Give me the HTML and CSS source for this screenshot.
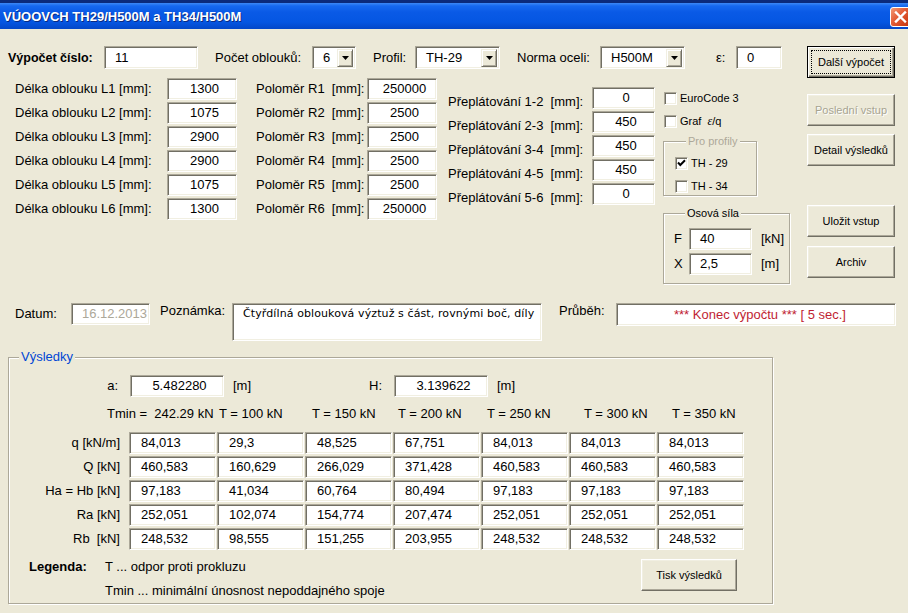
FILE: index.html
```html
<!DOCTYPE html>
<html lang="cs">
<head>
<meta charset="utf-8">
<title>VÚOOVCH TH29/H500M a TH34/H500M</title>
<link rel="stylesheet" href="styles.css">
</head>
<body>
<div class="window">
  <header class="titlebar">
    <span class="title">VÚOOVCH TH29/H500M a TH34/H500M</span>
    <span class="close"><svg width="19" height="18" viewBox="0 0 19 18"><path d="M5 4.5 L14 13.5 M14 4.5 L5 13.5" stroke="#fff" stroke-width="2.4" stroke-linecap="square"/></svg></span>
  </header>
  <main class="client">
    <section class="top">
      <div class="main">
        <div class="row1">
          <span class="lbl-bold lbl-cislo">Výpočet číslo:</span>
          <span class="edit edit-tall edit-cislo">11</span>
          <span class="lbl lbl-pocet">Počet oblouků:</span>
          <span class="combo combo-pocet"><span class="val">6</span><span class="drop"><svg width="7" height="4" viewBox="0 0 7 4"><path d="M0 0 H7 L3.5 4 Z" fill="#000"/></svg></span></span>
          <span class="lbl lbl-profil">Profil:</span>
          <span class="combo combo-wide"><span class="val">TH-29</span><span class="drop"><svg width="7" height="4" viewBox="0 0 7 4"><path d="M0 0 H7 L3.5 4 Z" fill="#000"/></svg></span></span>
          <span class="lbl lbl-norma">Norma oceli:</span>
          <span class="combo combo-wide"><span class="val">H500M</span><span class="drop"><svg width="7" height="4" viewBox="0 0 7 4"><path d="M0 0 H7 L3.5 4 Z" fill="#000"/></svg></span></span>
          <span class="lbl lbl-eps">ε:</span>
          <span class="edit edit-tall edit-eps">0</span>
        </div>
        <div class="cols">
          <div class="col col-a">
            <div class="frow"><span class="lbl la">Délka oblouku L1 [mm]:</span><span class="edit ctr ea">1300</span></div>
            <div class="frow"><span class="lbl la">Délka oblouku L2 [mm]:</span><span class="edit ctr ea">1075</span></div>
            <div class="frow"><span class="lbl la">Délka oblouku L3 [mm]:</span><span class="edit ctr ea">2900</span></div>
            <div class="frow"><span class="lbl la">Délka oblouku L4 [mm]:</span><span class="edit ctr ea">2900</span></div>
            <div class="frow"><span class="lbl la">Délka oblouku L5 [mm]:</span><span class="edit ctr ea">1075</span></div>
            <div class="frow"><span class="lbl la">Délka oblouku L6 [mm]:</span><span class="edit ctr ea">1300</span></div>
          </div>
          <div class="col col-b">
            <div class="frow"><span class="lbl lb">Poloměr R1  [mm]:</span><span class="edit ctr ea">250000</span></div>
            <div class="frow"><span class="lbl lb">Poloměr R2  [mm]:</span><span class="edit ctr ea">2500</span></div>
            <div class="frow"><span class="lbl lb">Poloměr R3  [mm]:</span><span class="edit ctr ea">2500</span></div>
            <div class="frow"><span class="lbl lb">Poloměr R4  [mm]:</span><span class="edit ctr ea">2500</span></div>
            <div class="frow"><span class="lbl lb">Poloměr R5  [mm]:</span><span class="edit ctr ea">2500</span></div>
            <div class="frow"><span class="lbl lb">Poloměr R6  [mm]:</span><span class="edit ctr ea">250000</span></div>
          </div>
          <div class="col col-c">
            <div class="frow"><span class="lbl lc">Přeplátování 1-2  [mm]:</span><span class="edit ctr ec">0</span></div>
            <div class="frow"><span class="lbl lc">Přeplátování 2-3  [mm]:</span><span class="edit ctr ec">450</span></div>
            <div class="frow"><span class="lbl lc">Přeplátování 3-4  [mm]:</span><span class="edit ctr ec">450</span></div>
            <div class="frow"><span class="lbl lc">Přeplátování 4-5  [mm]:</span><span class="edit ctr ec">450</span></div>
            <div class="frow"><span class="lbl lc">Přeplátování 5-6  [mm]:</span><span class="edit ctr ec">0</span></div>
          </div>
          <div class="col col-d">
            <div class="chk chk-euro"><span class="box"></span><span class="chk-text">EuroCode 3</span></div>
            <div class="chk chk-graf"><span class="box"></span><span class="chk-text">Graf  <i class="eps">ε</i>/q</span></div>
            <fieldset class="group profily">
              <legend class="legend-disabled">Pro profily</legend>
              <div class="chk"><span class="box"><svg width="11" height="11" viewBox="0 0 11 11"><path d="M2 4.5 L4.3 7 L9 2.2" stroke="#000" stroke-width="2" fill="none"/></svg></span><span class="chk-text">TH - 29</span></div>
              <div class="chk chk-34"><span class="box"></span><span class="chk-text">TH - 34</span></div>
            </fieldset>
            <fieldset class="group osova">
              <legend>Osová síla</legend>
              <div class="frow frow-os"><span class="lbl lo">F</span><span class="edit eo">40</span><span class="lbl unit">[kN]</span></div>
              <div class="frow frow-os frow-x"><span class="lbl lo">X</span><span class="edit eo">2,5</span><span class="lbl unit">[m]</span></div>
            </fieldset>
          </div>
        </div>
      </div>
      <div class="buttons">
        <div class="btn btn-default"><span class="focus">Další výpočet</span></div>
        <div class="btn btn-disabled btn-posledni">Poslední vstup</div>
        <div class="btn btn-detail">Detail výsledků</div>
        <div class="btn btn-ulozit">Uložit vstup</div>
        <div class="btn btn-archiv">Archiv</div>
      </div>
    </section>

    <section class="note-row">
      <span class="lbl lbl-datum">Datum:</span>
      <span class="edit edit-date">16.12.2013</span>
      <span class="lbl lbl-top lbl-pozn">Poznámka:</span>
      <div class="edit memo">Čtyřdílná oblouková výztuž s část, rovnými boč, díly</div>
      <span class="lbl lbl-top lbl-prubeh">Průběh:</span>
      <span class="edit progress">*** Konec výpočtu *** [ 5 sec.]</span>
    </section>

    <fieldset class="group results">
      <legend class="legend-blue">Výsledky</legend>
      <div class="res-ah">
        <span class="lbl lab-a">a:</span>
        <span class="edit ctr edit-res">5.482280</span>
        <span class="lbl unit-a">[m]</span>
        <span class="lbl lab-h">H:</span>
        <span class="edit ctr edit-res">3.139622</span>
        <span class="lbl unit-h">[m]</span>
      </div>
      <div class="res-head">
        <span class="h h0">Tmin =  242.29 kN</span>
        <span class="h h1">T = 100 kN</span>
        <span class="h h2">T = 150 kN</span>
        <span class="h h3">T = 200 kN</span>
        <span class="h h4">T = 250 kN</span>
        <span class="h h5">T = 300 kN</span>
        <span class="h h6">T = 350 kN</span>
      </div>
      <div class="res-grid">
        <span class="rl">q [kN/m]</span>
        <span class="edit cell">84,013</span><span class="edit cell">29,3</span><span class="edit cell">48,525</span><span class="edit cell">67,751</span><span class="edit cell">84,013</span><span class="edit cell">84,013</span><span class="edit cell">84,013</span>
        <span class="rl">Q [kN]</span>
        <span class="edit cell">460,583</span><span class="edit cell">160,629</span><span class="edit cell">266,029</span><span class="edit cell">371,428</span><span class="edit cell">460,583</span><span class="edit cell">460,583</span><span class="edit cell">460,583</span>
        <span class="rl">Ha = Hb [kN]</span>
        <span class="edit cell">97,183</span><span class="edit cell">41,034</span><span class="edit cell">60,764</span><span class="edit cell">80,494</span><span class="edit cell">97,183</span><span class="edit cell">97,183</span><span class="edit cell">97,183</span>
        <span class="rl">Ra [kN]</span>
        <span class="edit cell">252,051</span><span class="edit cell">102,074</span><span class="edit cell">154,774</span><span class="edit cell">207,474</span><span class="edit cell">252,051</span><span class="edit cell">252,051</span><span class="edit cell">252,051</span>
        <span class="rl">Rb  [kN]</span>
        <span class="edit cell">248,532</span><span class="edit cell">98,555</span><span class="edit cell">151,255</span><span class="edit cell">203,955</span><span class="edit cell">248,532</span><span class="edit cell">248,532</span><span class="edit cell">248,532</span>
      </div>
      <div class="legend-row">
        <span class="leg-title">Legenda:</span>
        <div class="leg-texts">
          <div>T ... odpor proti prokluzu</div>
          <div>Tmin ... minimální únosnost nepoddajného spoje</div>
        </div>
        <div class="btn btn-print">Tisk výsledků</div>
      </div>
    </fieldset>
  </main>
</div>
</body>
</html>
```

FILE: styles.css
```css
* { box-sizing: border-box; }
html, body { margin: 0; padding: 0; }
body {
  width: 908px;
  height: 613px;
  overflow: hidden;
  background: #ECE9D8;
  font-family: "Liberation Sans", Arial, sans-serif;
  font-size: 13px;
  color: #000;
}
.window { width: 908px; height: 613px; display: flex; flex-direction: column; }

/* title bar */
.titlebar {
  height: 29px;
  flex: none;
  display: flex;
  align-items: center;
  justify-content: space-between;
  padding: 3px 0 0 3px;
  background: linear-gradient(#0b2a7a 0, #0b2a7a 3px, #3c88f5 3px, #1668ee 6px, #0a5ae6 12px, #0556e2 22px, #0347c8 29px);
  color: #fff;
}
.title { font-weight: bold; font-size: 13px; text-shadow: 1px 1px 0 #0a2a80; white-space: nowrap; }
.close {
  width: 21px;
  height: 20px;
  margin-right: -3px;
  margin-top: 1px;
  border: 1px solid #fff;
  border-radius: 3px;
  background: linear-gradient(135deg, #f39a76 0%, #e4603a 40%, #d2431c 75%, #c0360f 100%);
  display: flex;
  align-items: center;
  justify-content: center;
}
.close svg { display: block; }

.client { flex: 1; display: flex; flex-direction: column; }

/* generic controls */
.lbl { white-space: pre; line-height: 22px; }
.lbl-bold { font-weight: bold; font-size: 12.5px; white-space: nowrap; }
.edit {
  display: block;
  height: 22px;
  background: #fff;
  border: 1px solid;
  border-color: #ACA899 #fff #fff #ACA899;
  box-shadow: inset 1px 1px 0 #716F64, inset -1px -1px 0 #F1EFE2;
  line-height: 20px;
  white-space: nowrap;
  overflow: hidden;
  padding: 0 0 0 10px;
}
.edit-tall { height: 23px; line-height: 21px; }
.ctr { text-align: center; padding: 0 0 0 5px; }

.combo {
  display: flex;
  height: 23px;
  background: #fff;
  border: 1px solid;
  border-color: #ACA899 #fff #fff #ACA899;
  box-shadow: inset 1px 1px 0 #716F64, inset -1px -1px 0 #F1EFE2;
  padding: 2px 2px 1px 2px;
}
.combo .val { flex: 1; line-height: 18px; padding-left: 8px; white-space: nowrap; }
.combo .drop {
  width: 16px;
  background: #ECE9D8;
  border: 1px solid;
  border-color: #F1EFE2 #716F64 #716F64 #F1EFE2;
  box-shadow: inset 1px 1px 0 #fff, inset -1px -1px 0 #ACA899;
  display: flex;
  align-items: center;
  justify-content: center;
}
.combo .drop svg { display: block; }

.btn {
  height: 32px;
  display: flex;
  align-items: center;
  justify-content: center;
  background: #ECE9D8;
  border: 1px solid;
  border-color: #fff #716F64 #716F64 #fff;
  box-shadow: inset -1px -1px 0 #ACA899, inset 1px 1px 0 #F1EFE2;
  font-size: 11px;
  white-space: nowrap;
}
.btn-default {
  border-color: #000;
  box-shadow: inset 1px 1px 0 #fff, inset -1px -1px 0 #716F64, inset -2px -2px 0 #ACA899;
  padding: 3px;
  align-items: stretch;
}
.btn-default .focus {
  flex: 1;
  border: 1px dotted #000;
  display: flex;
  align-items: center;
  justify-content: center;
}
.btn-disabled { color: #A7A491; text-shadow: 1px 1px 0 #fff; }

.chk { display: flex; align-items: center; height: 13px; }
.box {
  width: 13px;
  height: 13px;
  flex: none;
  background: #fff;
  border: 1px solid;
  border-color: #ACA899 #fff #fff #ACA899;
  box-shadow: inset 1px 1px 0 #716F64, inset -1px -1px 0 #F1EFE2;
  display: flex;
  align-items: center;
  justify-content: center;
}
.box svg { display: block; }
.chk-text { font-size: 11px; padding-left: 3px; white-space: pre; line-height: 13px; }
.eps { font-family: "Liberation Serif", serif; font-size: 12px; }

.group {
  margin: 0;
  padding: 0;
  min-width: 0;
  border: 1px solid #ACA899;
  box-shadow: inset 1px 1px 0 #fff, 1px 1px 0 #fff;
}
.group legend {
  padding: 0 2px;
  margin-left: 11px;
  font-size: 11px;
  line-height: 12px;
  background: #ECE9D8;
}
.legend-disabled { color: #ACA899; }
.legend-blue { color: #0046D5; }

/* top section */
.top { height: 274px; flex: none; padding: 17px 0 0 8px; display: flex; }
.main { width: 782px; flex: none; display: flex; flex-direction: column; }
.row1 { display: flex; align-items: center; height: 23px; }
.lbl-cislo { width: 96px; }
.edit-cislo { width: 94px; }
.lbl-pocet { margin-left: 17px; width: 97px; }
.combo-pocet { width: 44px; }
.lbl-profil { margin-left: 17px; width: 42px; }
.combo-wide { width: 85px; }
.lbl-norma { margin-left: 17px; width: 83px; }
.lbl-eps { margin-left: 31px; width: 20px; }
.edit-eps { width: 46px; }

.cols { display: flex; margin-top: 9px; padding-left: 7px; }
.col { display: flex; flex-direction: column; }
.frow { display: flex; height: 22px; margin-bottom: 2px; }
.la { width: 152px; }
.ea { width: 70px; }
.col-b { margin-left: 19px; }
.lb { width: 111px; }
.col-c { margin-left: 11px; margin-top: 9px; }
.lc { width: 144px; margin-top: 4px; }
.ec { width: 63px; }
.col-d { margin-left: 8px; width: 127px; }
.chk-euro { margin-top: 14px; margin-left: 1px; }
.chk-graf { margin-top: 10px; margin-left: 1px; }
.profily { margin-top: 7px; width: 94px; padding: 10px 0 2px 11px; }
.chk-34 { margin-top: 10px; }
.osova { margin-top: 11px; width: 127px; padding: 9px 0 8px 10px; }
.frow-os { margin-bottom: 0; }
.frow-x { margin-top: 3px; }
.lo { width: 15px; }
.eo { width: 63px; }
.unit { margin-left: 9px; }

.buttons { margin-left: 17px; width: 88px; flex: none; display: flex; flex-direction: column; }
.btn-posledni { margin-top: 16px; }
.btn-detail { margin-top: 8px; }
.btn-ulozit { margin-top: 39px; }
.btn-archiv { margin-top: 9px; }

/* note row */
.note-row { display: flex; align-items: flex-start; height: 38px; flex: none; padding-left: 15px; }
.lbl-datum { width: 56px; }
.edit-date { width: 79px; color: #ACA899; padding: 0 2px 0 0; text-align: right; }
.lbl-top { line-height: 16px; }
.lbl-pozn { margin-left: 10px; width: 72px; }
.memo {
  width: 310px;
  height: 38px;
  font-family: "DejaVu Sans", "Liberation Sans", sans-serif;
  font-size: 11px;
  letter-spacing: 0.1px;
  line-height: 19px;
  padding-left: 10px;
}
.lbl-prubeh { margin-left: 17px; width: 57px; }
.progress { width: 280px; height: 23px; line-height: 21px; color: #c01e32; text-align: center; padding: 0 0 0 8px; }

/* results */
.results { margin: 9px 0 0 8px; width: 765px; padding: 11px 0 0 0; }
.results > legend { font-size: 13px; line-height: 14px; margin-left: 10px; }
.res-ah { display: flex; height: 22px; }
.lab-a { width: 121px; text-align: right; padding-right: 12px; }
.edit-res { width: 94px; }
.unit-a { margin-left: 9px; width: 136px; }
.lab-h { width: 25px; }
.unit-h { margin-left: 9px; }
.res-head { display: flex; margin-top: 9px; line-height: 16px; padding-left: 98px; white-space: pre; }
.h0 { width: 112px; }
.h1 { width: 93px; }
.h2 { width: 86px; }
.h3 { width: 89px; }
.h4 { width: 97px; }
.h5 { width: 88px; }
.res-grid {
  display: grid;
  grid-template-columns: 119px repeat(7, 87px);
  grid-auto-rows: 22px;
  column-gap: 1px;
  row-gap: 2px;
  margin-top: 10px;
}
.rl { text-align: right; padding-right: 8px; line-height: 22px; white-space: pre; }
.cell { padding-left: 11px; }
.legend-row { display: flex; margin-top: 5px; }
.leg-title { width: 96px; padding-left: 20px; font-weight: bold; line-height: 24px; }
.leg-texts { width: 536px; line-height: 24px; }
.btn-print { width: 96px; margin-top: 4px; }
```
